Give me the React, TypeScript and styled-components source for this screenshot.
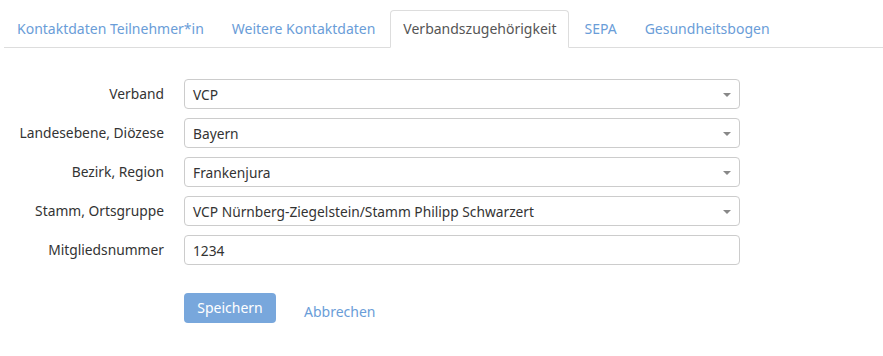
import React from "react";
import styled, { createGlobalStyle } from "styled-components";

const Global = createGlobalStyle`
  html, body { margin: 0; padding: 0; background: #fff; }
  body { font-family: "Noto Sans", "Open Sans", Arial, sans-serif; font-size: 14px; color: #333; }
  * { box-sizing: border-box; }
`;

const Page = styled.div`
  width: 883px;
  padding: 10px 0 0 4px;
`;

const Tabs = styled.ul`
  display: flex;
  width: 100%;
  list-style: none;
  margin: 0;
  padding: 0;
  border-bottom: 1px solid #ddd;
`;

const Tab = styled.li<{ $active?: boolean }>`
  margin-right: 2px;
  margin-bottom: -1px;
  padding: 8px 12px;
  line-height: 20px;
  border: 1px solid ${(p) => (p.$active ? "#ddd" : "transparent")};
  border-bottom-color: ${(p) => (p.$active ? "#fff" : "transparent")};
  border-radius: 4px 4px 0 0;
  background: ${(p) => (p.$active ? "#fff" : "transparent")};
  color: ${(p) => (p.$active ? "#555" : "#6a9dd8")};
  white-space: nowrap;
  cursor: pointer;
`;

const Form = styled.form`
  display: grid;
  grid-template-columns: 160px 556px;
  column-gap: 20px;
  row-gap: 9px;
  align-items: center;
  margin-top: 31px;
`;

const Label = styled.label`
  text-align: right;
  color: #333;
  line-height: 20px;
  font-size: 13.8px;
`;

const Field = styled.div`
  position: relative;
  height: 30px;
  border: 1px solid #ccc;
  border-radius: 4px;
  padding: 0 8px;
  display: flex;
  align-items: center;
  color: #333;
  background: #fff;
  font-size: 13.75px;
`;

const Caret = styled.span`
  position: absolute;
  right: 8px;
  top: 13px;
  width: 0;
  height: 0;
  border-left: 4px solid transparent;
  border-right: 4px solid transparent;
  border-top: 4px solid #888;
`;

const Actions = styled.div`
  grid-column: 2;
  display: flex;
  align-items: flex-start;
  gap: 28px;
  margin-top: 19px;
`;

const Button = styled.button`
  width: 92px;
  height: 30px;
  border: none;
  border-radius: 4px;
  background: #78a7dc;
  color: #fff;
  font-family: inherit;
  font-size: 14px;
  padding: 0;
  line-height: 28px;
`;

const LinkBtn = styled.a`
  color: #6a9dd8;
  text-decoration: none;
  line-height: 20px;
  margin-top: 9px;
`;

const tabs = [
  "Kontaktdaten Teilnehmer*in",
  "Weitere Kontaktdaten",
  "Verbandszugehörigkeit",
  "SEPA",
  "Gesundheitsbogen",
];

const fields: { label: string; value: string; select: boolean }[] = [
  { label: "Verband", value: "VCP", select: true },
  { label: "Landesebene, Diözese", value: "Bayern", select: true },
  { label: "Bezirk, Region", value: "Frankenjura", select: true },
  { label: "Stamm, Ortsgruppe", value: "VCP Nürnberg-Ziegelstein/Stamm Philipp Schwarzert", select: true },
  { label: "Mitgliedsnummer", value: "1234", select: false },
];

export default function App() {
  return (
    <Page>
      <Global />
      <Tabs>
        {tabs.map((t) => (
          <Tab key={t} $active={t === "Verbandszugehörigkeit"}>
            {t}
          </Tab>
        ))}
      </Tabs>
      <Form onSubmit={(e) => e.preventDefault()}>
        {fields.map((f) => (
          <React.Fragment key={f.label}>
            <Label>{f.label}</Label>
            <Field>
              {f.value}
              {f.select && <Caret />}
            </Field>
          </React.Fragment>
        ))}
        <Actions>
          <Button type="submit">Speichern</Button>
          <LinkBtn href="#">Abbrechen</LinkBtn>
        </Actions>
      </Form>
    </Page>
  );
}
